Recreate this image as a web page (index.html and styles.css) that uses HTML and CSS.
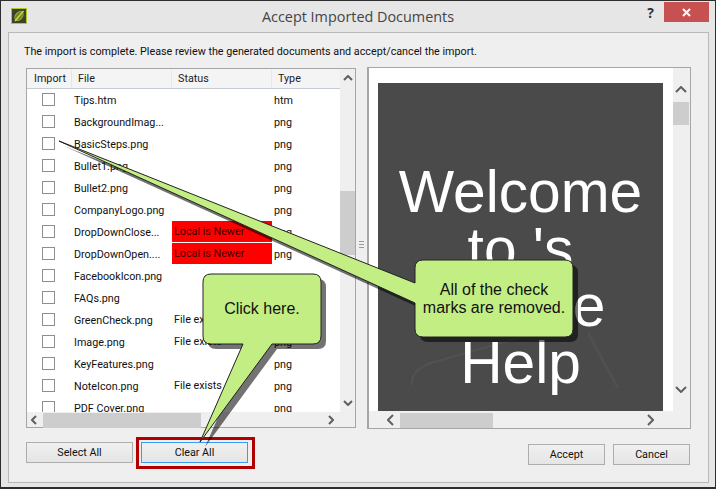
FILE: index.html
```html
<!DOCTYPE html>
<html lang="en">
<head>
    <meta charset="UTF-8">
    <title>Accept Imported Documents</title>
    <link rel="stylesheet" href="styles.css">
</head>
<body>
    <div class="window">
        <div class="titlebar">
            <svg class="app-icon" width="16" height="16" viewBox="0 0 16 16">
                <rect x="0.5" y="0.5" width="15" height="15" fill="#3f4030" stroke="#a9cc22"/>
                <ellipse cx="8" cy="8" rx="3.4" ry="5" transform="rotate(40 8 8)" fill="#6f7c2c" stroke="#9db02c"/>
                <path d="M4 13 L12.5 3" fill="none" stroke="#c6e03a" stroke-width="1.4"/>
            </svg>
            <div class="title">Accept Imported Documents</div>
            <div class="help">?</div>
            <div class="close">
                <svg width="9" height="9" viewBox="0 0 9 9"><path d="M1 1 L8 8 M8 1 L1 8" stroke="#fff" stroke-width="2"/></svg>
            </div>
        </div>

        <div class="panel">
            <p class="intro">The import is complete. Please review the generated documents and accept/cancel the import.</p>

            <div class="columns">
                <div class="left">
                    <div class="frame list-frame">
                        <div class="list-main">
                            <div class="list-view">
                                <div class="row head">
                                    <div class="h-import">Import</div>
                                    <div class="h-file">File</div>
                                    <div class="h-status">Status</div>
                                    <div class="h-type">Type</div>
                                </div>
                                <div class="row"><span class="box"></span><div class="file">Tips.htm</div><div class="status"></div><div class="type">htm</div></div>
                                <div class="row"><span class="box"></span><div class="file">BackgroundImag...</div><div class="status"></div><div class="type">png</div></div>
                                <div class="row"><span class="box"></span><div class="file">BasicSteps.png</div><div class="status"></div><div class="type">png</div></div>
                                <div class="row"><span class="box"></span><div class="file">Bullet1.png</div><div class="status"></div><div class="type">png</div></div>
                                <div class="row"><span class="box"></span><div class="file">Bullet2.png</div><div class="status"></div><div class="type">png</div></div>
                                <div class="row"><span class="box"></span><div class="file">CompanyLogo.png</div><div class="status"></div><div class="type">png</div></div>
                                <div class="row"><span class="box"></span><div class="file">DropDownClose...</div><div class="status newer">Local is Newer</div><div class="type">png</div></div>
                                <div class="row"><span class="box"></span><div class="file">DropDownOpen....</div><div class="status newer">Local is Newer</div><div class="type">png</div></div>
                                <div class="row"><span class="box"></span><div class="file">FacebookIcon.png</div><div class="status"></div><div class="type">png</div></div>
                                <div class="row"><span class="box"></span><div class="file">FAQs.png</div><div class="status"></div><div class="type">png</div></div>
                                <div class="row"><span class="box"></span><div class="file">GreenCheck.png</div><div class="status">File exists</div><div class="type">png</div></div>
                                <div class="row"><span class="box"></span><div class="file">Image.png</div><div class="status">File exists</div><div class="type">png</div></div>
                                <div class="row"><span class="box"></span><div class="file">KeyFeatures.png</div><div class="status"></div><div class="type">png</div></div>
                                <div class="row"><span class="box"></span><div class="file">NoteIcon.png</div><div class="status">File exists</div><div class="type">png</div></div>
                                <div class="row"><span class="box"></span><div class="file">PDF Cover.png</div><div class="status"></div><div class="type">png</div></div>
                            </div>
                            <div class="vbar list-vbar">
                                <svg class="arrow" width="10" height="6" viewBox="0 0 10 6"><path d="M1 5 L5 1 L9 5" fill="none" stroke="#606060" stroke-width="2"/></svg>
                                <div class="vtrack"><div class="vthumb list-vthumb"></div></div>
                                <svg class="arrow" width="10" height="6" viewBox="0 0 10 6"><path d="M1 1 L5 5 L9 1" fill="none" stroke="#606060" stroke-width="2"/></svg>
                            </div>
                        </div>
                        <div class="hbar list-hbar">
                            <svg class="arrow" width="6" height="10" viewBox="0 0 6 10"><path d="M5 1 L1 5 L5 9" fill="none" stroke="#606060" stroke-width="2"/></svg>
                            <div class="htrack"><div class="hthumb list-hthumb"></div></div>
                            <svg class="arrow" width="6" height="10" viewBox="0 0 6 10"><path d="M1 1 L5 5 L1 9" fill="none" stroke="#606060" stroke-width="2"/></svg>
                        </div>
                    </div>
                    <div class="left-buttons">
                        <button class="btn wide">Select All</button>
                        <button class="btn wide focused">Clear All</button>
                    </div>
                </div>

                <div class="splitter"><span class="grip"></span></div>

                <div class="right">
                    <div class="frame preview-frame">
                        <div class="preview-main">
                            <div class="preview">
                                <div class="slide">
                                    <svg class="slide-art" width="285" height="328" viewBox="0 0 285 328">
                                        <path d="M34 302 Q32 285 60 278 Q130 258 190 240" fill="none" stroke="#525252" stroke-width="2"/>
                                        <path d="M210 250 L240 305" fill="none" stroke="#505050" stroke-width="3"/>
                                    </svg>
                                    <div class="slide-text">Welcome<br>to 's<br>Online<br>Help</div>
                                </div>
                            </div>
                            <div class="vbar preview-vbar">
                                <svg class="arrow" width="12" height="7" viewBox="0 0 12 7"><path d="M1 6 L6 1 L11 6" fill="none" stroke="#606060" stroke-width="2"/></svg>
                                <div class="vtrack"><div class="vthumb preview-vthumb"></div></div>
                                <svg class="arrow" width="12" height="7" viewBox="0 0 12 7"><path d="M1 1 L6 6 L11 1" fill="none" stroke="#606060" stroke-width="2"/></svg>
                            </div>
                        </div>
                        <div class="hbar preview-hbar">
                            <svg class="arrow" width="7" height="12" viewBox="0 0 7 12"><path d="M6 1 L1 6 L6 11" fill="none" stroke="#606060" stroke-width="2"/></svg>
                            <div class="htrack"><div class="hthumb preview-hthumb"></div></div>
                            <svg class="arrow" width="7" height="12" viewBox="0 0 7 12"><path d="M1 1 L6 6 L1 11" fill="none" stroke="#606060" stroke-width="2"/></svg>
                        </div>
                    </div>
                    <div class="right-buttons">
                        <button class="btn">Accept</button>
                        <button class="btn">Cancel</button>
                    </div>
                </div>
            </div>
        </div>
    </div>

    <div class="highlight"></div>

    <svg class="callouts" width="716" height="489" viewBox="0 0 716 489">
        <path class="shade" d="M59 141 L415 283 L415 268 Q415 260 423 260 L565 260 Q573 260 573 268 L573 329 Q573 337 565 337 L423 337 Q415 337 415 329 L415 303 Z" transform="translate(5 5)"/>
        <path class="bubble" d="M59 141 L415 283 L415 268 Q415 260 423 260 L565 260 Q573 260 573 268 L573 329 Q573 337 565 337 L423 337 Q415 337 415 329 L415 303 Z"/>
        <text class="note" x="494" y="295">All of the check</text>
        <text class="note" x="494" y="313">marks are removed.</text>

        <path class="shade" d="M200 442 L243 344 L211 344 Q203 344 203 336 L203 282 Q203 274 211 274 L313 274 Q321 274 321 282 L321 336 Q321 344 313 344 L272 344 Z" transform="translate(5 5)"/>
        <path class="bubble" d="M200 442 L243 344 L211 344 Q203 344 203 336 L203 282 Q203 274 211 274 L313 274 Q321 274 321 282 L321 336 Q321 344 313 344 L272 344 Z"/>
        <text class="note" x="262" y="314">Click here.</text>
    </svg>
</body>
</html>
```

FILE: styles.css
```css
html, body {
    margin: 0;
    padding: 0;
}

body {
    width: 716px;
    height: 489px;
    overflow: hidden;
    position: relative;
    font-family: Roboto, "Liberation Sans", sans-serif;
    font-size: 10.75px;
    color: #111;
}

.window {
    box-sizing: border-box;
    width: 716px;
    height: 489px;
    display: flex;
    flex-direction: column;
    background-color: #e6e6e6;
    border: 1px solid #2e2e2e;
    border-bottom-width: 2px;
}

.titlebar {
    height: 30px;
    flex: none;
    display: flex;
    position: relative;
    padding-left: 10px;
}

.app-icon {
    margin-top: 7px;
}

.title {
    position: absolute;
    left: 0;
    right: 0;
    top: 6px;
    text-align: center;
    font-family: "Open Sans", sans-serif;
    font-size: 14.4px;
    color: #444;
}

.help {
    position: absolute;
    right: 61px;
    top: 2px;
    font-family: "Open Sans", sans-serif;
    font-size: 14px;
    font-weight: bold;
    color: #333;
}

.close {
    position: absolute;
    right: 6px;
    top: 1px;
    width: 45px;
    height: 20px;
    background-color: #c75050;
    display: flex;
    align-items: center;
    justify-content: center;
}

.panel {
    flex: 1;
    box-sizing: border-box;
    margin: 1px 6px 4px 7px;
    background-color: #efefef;
    border: 1px solid #b9b9b9;
    padding: 0 16px 0 17px;
    display: flex;
    flex-direction: column;
}

.intro {
    margin: 11px 0 0 -2px;
    height: 23px;
    line-height: 15px;
    white-space: nowrap;
}

.columns {
    display: flex;
}

.left {
    width: 330px;
    margin-top: 1px;
}

.splitter {
    width: 11px;
    display: flex;
    align-items: center;
    justify-content: center;
}

.grip {
    width: 5px;
    height: 5px;
    margin-bottom: 44px;
    border-top: 1px solid #999;
    border-bottom: 1px solid #999;
    background: linear-gradient(#999, #999) center / 100% 1px no-repeat;
}

.right {
    width: 324px;
}

.frame {
    box-sizing: border-box;
    border: 1px solid #a6a6a6;
    background-color: #efefef;
    display: flex;
    flex-direction: column;
}

.list-frame {
    height: 360px;
}

.preview-frame {
    height: 362px;
    border-left-width: 2px;
}

.list-main,
.preview-main {
    display: flex;
    flex: 1;
    min-height: 0;
}

.list-view {
    width: 313px;
    background-color: #fff;
    overflow: hidden;
}

.row {
    height: 22px;
    display: grid;
    grid-template-columns: 47px 98px 100px 1fr;
    align-items: center;
    white-space: nowrap;
}

.head {
    height: 20px;
    background-color: #f4f4f4;
    border-bottom: 1px solid #c4cbd3;
    box-sizing: border-box;
    color: #222;
    grid-template-columns: 45px 100px 100px 1fr;
}

.head div {
    line-height: 19px;
    padding-left: 6px;
    border-right: 1px solid #e3e8ee;
}

.head .h-import {
    padding-left: 7px;
}

.head .h-type {
    border-right: none;
}

.box {
    box-sizing: border-box;
    width: 13px;
    height: 13px;
    margin: 0 0 2px 15px;
    background-color: #fff;
    border: 1px solid #8e8e8e;
}

.status {
    height: 21px;
    line-height: 21px;
    padding-left: 2px;
    margin-bottom: 1px;
}

.newer {
    background-color: #ff0000;
    color: #3a0000;
}

.type {
    padding-left: 2px;
}

.vbar {
    display: flex;
    flex-direction: column;
    align-items: center;
}

.list-vbar {
    width: 15px;
}

.preview-vbar {
    width: 16px;
}

.vtrack,
.htrack {
    flex: 1;
    position: relative;
}

.vtrack {
    width: 100%;
}

.list-vbar .arrow:first-child {
    margin-top: 6px;
}

.list-vbar .arrow:last-child {
    margin-bottom: 6px;
}

.preview-vbar .arrow:first-child {
    margin-top: 18px;
}

.preview-vbar .arrow:last-child {
    margin-bottom: 18px;
}

.hbar {
    display: flex;
    align-items: center;
}

.list-hbar {
    height: 15px;
    padding: 0 21px 0 4px;
}

.preview-hbar {
    height: 17px;
    padding: 0 36px 0 18px;
}

.hthumb,
.vthumb {
    position: absolute;
    background-color: #cdcdcd;
}

.vthumb {
    left: 0;
    right: 0;
}

.hthumb {
    top: -7px;
    height: 15px;
}

.list-vthumb {
    top: 110px;
    height: 64px;
}

.preview-vthumb {
    top: 9px;
    height: 23px;
}

.list-hthumb {
    left: 6px;
    width: 158px;
}

.preview-hthumb {
    left: 6px;
    width: 93px;
}

.preview {
    width: 304px;
    box-sizing: border-box;
    background-color: #fff;
    padding: 15px 10px 0 9px;
}

.slide {
    height: 328px;
    position: relative;
    box-sizing: border-box;
    background-color: #4a4a4a;
    overflow: hidden;
}

.slide-art {
    position: absolute;
    left: 0;
    top: 0;
}

.slide-text {
    position: relative;
    padding-top: 80px;
    color: #fff;
    font-family: "Liberation Sans", sans-serif;
    font-size: 58.7px;
    line-height: 57px;
    text-align: center;
}

.left-buttons {
    display: flex;
    gap: 8px;
    margin-top: 14px;
}

.right-buttons {
    display: flex;
    justify-content: flex-end;
    gap: 8px;
    margin-top: 15px;
    padding-right: 1px;
}

.btn {
    box-sizing: border-box;
    width: 77px;
    height: 21px;
    padding: 0;
    font-family: inherit;
    font-size: 10.75px;
    color: #111;
    border: 1px solid #adadad;
    background: linear-gradient(#f0f0f0, #e5e5e5);
}

.wide {
    width: 107px;
}

.focused {
    border-color: #3c9bf0;
}

.highlight {
    position: absolute;
    left: 136px;
    top: 437px;
    width: 113px;
    height: 26px;
    border: 3px solid #b00000;
}

.callouts {
    position: absolute;
    left: 0;
    top: 0;
}

.shade {
    fill: #000;
    opacity: 0.55;
}

.bubble {
    fill: #c3ee84;
    stroke: #222;
    stroke-width: 1;
}

.note {
    font-family: "Liberation Sans", sans-serif;
    font-size: 16px;
    fill: #111;
    text-anchor: middle;
}
```
